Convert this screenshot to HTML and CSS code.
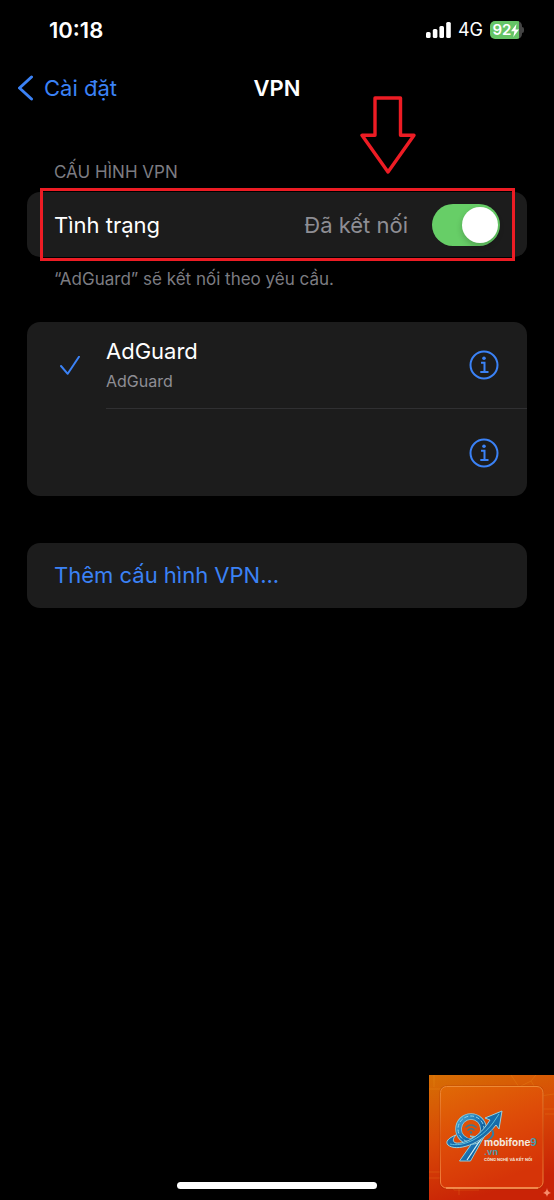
FILE: index.html
```html
<!DOCTYPE html>
<html lang="vi">
<head>
<meta charset="utf-8">
<meta name="viewport" content="width=device-width, initial-scale=1">
<title>VPN</title>
<link rel="stylesheet" href="styles.css">
</head>
<body>
<div class="screen">
  <header class="status-bar">
    <time class="clock">10:18</time>
    <div class="indicators">
      <svg class="signal" width="25" height="16" viewBox="0 0 25 16" fill="#fff" aria-hidden="true">
        <rect x="0" y="10" width="4.600" height="6" rx="1.500"/>
        <rect x="6.800" y="7" width="4.600" height="9" rx="1.500"/>
        <rect x="13.400" y="4" width="4.600" height="12" rx="1.500"/>
        <rect x="20.200" y="0" width="4.600" height="16" rx="1.500"/>
      </svg>
      <span class="network">4G</span>
      <span class="battery">
        <span class="level">92</span>
        <svg width="8" height="13" viewBox="0 0 8 13" fill="#fff" aria-hidden="true"><path d="M5.500 0 0 7.300h3.400L2.300 13 8 5.400H4.500z"/></svg>
      </span>
    </div>
  </header>

  <nav class="nav-bar">
    <a class="back" href="#">
      <svg width="16" height="26" viewBox="0 0 16 26" fill="none" stroke="currentColor" stroke-width="3" stroke-linecap="round" stroke-linejoin="round" aria-hidden="true"><path d="M13.500 2 1.500 13l12 11"/></svg>
      <span>Cài đặt</span>
    </a>
    <h1 class="title">VPN</h1>
  </nav>

  <main class="content">
    <section class="group">
      <h2 class="caption">CẤU HÌNH VPN</h2>
      <div class="card status-card">
        <label class="row" for="vpn-status">
          <span class="label">Tình trạng</span>
          <span class="value">Đã kết nối</span>
          <input class="switch" id="vpn-status" type="checkbox" role="switch" checked>
        </label>
        <div class="highlight"></div>
        <svg class="arrow" width="56" height="80" viewBox="0 0 56 80" fill="none" stroke="#ed1c24" stroke-width="3.400" stroke-linejoin="round" aria-hidden="true"><path d="M15 2h25.500v37.300H54L28 76 2 39.300h13z"/></svg>
      </div>
      <p class="footnote">“AdGuard” sẽ kết nối theo yêu cầu.</p>
    </section>

    <ul class="card profiles">
      <li class="profile">
        <svg class="check" width="20" height="20" viewBox="0 0 20 20" fill="none" stroke="currentColor" stroke-width="2" stroke-linecap="round" stroke-linejoin="round" aria-hidden="true"><path d="M1 10l6.700 7.800L19 0.800"/></svg>
        <div class="profile-body">
          <div class="names">
            <span class="label">AdGuard</span>
            <span class="detail">AdGuard</span>
          </div>
          <button class="info" type="button" aria-label="Chi tiết AdGuard">
            <svg width="30" height="30" viewBox="0 0 30 30" fill="none" stroke="currentColor" stroke-width="2" aria-hidden="true"><circle cx="15" cy="15" r="13.500"/><path d="M12 12.700h3.500v9M11.300 22h8.200"/><circle cx="15" cy="8.200" r="1.800" fill="currentColor" stroke="none"/></svg>
          </button>
        </div>
      </li>
      <li class="profile">
        <span class="check"></span>
        <div class="profile-body">
          <div class="names"></div>
          <button class="info" type="button" aria-label="Chi tiết">
            <svg width="30" height="30" viewBox="0 0 30 30" fill="none" stroke="currentColor" stroke-width="2" aria-hidden="true"><circle cx="15" cy="15" r="13.500"/><path d="M12 12.700h3.500v9M11.300 22h8.200"/><circle cx="15" cy="8.200" r="1.800" fill="currentColor" stroke="none"/></svg>
          </button>
        </div>
      </li>
    </ul>

    <button class="card add" type="button">Thêm cấu hình VPN...</button>
  </main>

  <div class="home-indicator"></div>

  <aside class="brand">
    <svg class="brand-art" viewBox="0 0 125 125" aria-hidden="true">
      <defs>
        <linearGradient id="back" x1="0" y1="0" x2="0.300" y2="1"><stop offset="0" stop-color="#d66f04"/><stop offset="0.500" stop-color="#d84906"/><stop offset="1" stop-color="#c92306"/></linearGradient>
        <linearGradient id="panel" x1="0" y1="0" x2="0.400" y2="1"><stop offset="0" stop-color="#e06a06"/><stop offset="0.500" stop-color="#de4c08"/><stop offset="1" stop-color="#d63408"/></linearGradient>
        <linearGradient id="edge" x1="0" y1="0" x2="0" y2="1"><stop offset="0" stop-color="#ee8a35"/><stop offset="0.500" stop-color="#dc5a18"/><stop offset="1" stop-color="#f58340"/></linearGradient>
        <linearGradient id="blue" x1="0" y1="0" x2="1" y2="1"><stop offset="0" stop-color="#4aa6d0"/><stop offset="0.500" stop-color="#1871b2"/><stop offset="1" stop-color="#0c477f"/></linearGradient>
      </defs>
      <rect width="125" height="125" fill="url(#back)"/>
      <g fill="none" stroke="#f2a526" stroke-width="0.700" opacity="0.300"><path d="M82 0l8 12 12-6 5-6M102 6l9 15 14-2M111 21l-5 12M0 97h24l8 8h18M0 103h18l7 12h25M30 90v30M113 34h12M116 39h9M5 0v12M0 14h12"/></g>
      <rect x="10.500" y="10.500" width="104.500" height="104" rx="7" fill="#a32c04" opacity="0.400"/>
      <rect x="11.500" y="11.500" width="102.500" height="101.500" rx="6" fill="url(#panel)" stroke="url(#edge)" stroke-width="1"/>
      <path d="M17 113h92" stroke="#ffb873" stroke-width="1"/>
      <path d="M41 61 51 62 56 60 41.500 86H30.500L46 64z" fill="url(#blue)" stroke="#8fcbd9" stroke-width="1"/>
      <circle cx="42" cy="54" r="12.500" fill="none" stroke="#8fcbd9" stroke-width="6.500"/>
      <circle cx="42" cy="54" r="12.500" fill="none" stroke="url(#blue)" stroke-width="5"/>
      <circle cx="42" cy="54" r="13" fill="none" stroke="#8fd3e8" stroke-width="1" stroke-dasharray="4 2"/>
      <path d="M52 64 38 85" stroke="#d9f5f5" stroke-width="1.200"/>
      <g stroke-linejoin="round">
        <path d="M27 60c-8 3-11 7-8 10 8 7 33 0 48-20l3 4 3-18-17 7 5 2C51 62 36 69 27 68c-4-1-3-5 0-8z" fill="#176caa" stroke="#9bd1dc" stroke-width="1"/>
        <path d="M21 69c12 3 30-4 43-21l6-9" fill="none" stroke="#5bc0df" stroke-width="1"/>
        <path d="M63 55c3 4 0 8-5 11" fill="none" stroke="#327fa4" stroke-width="2"/>
      </g>
      <g fill="none" stroke="#397a91" stroke-width="1.600" stroke-linecap="round"><path d="M37 52q5-4 10 0M39 55q3-2.500 6 0"/><circle cx="42" cy="57.500" r="0.500"/></g>
      <path d="M118 113q.5 4 4 5-3.500.5-4 4-.5-3.500-4-4 3.500-1 4-5" fill="#f78d6c"/>
    </svg>
    <div class="brand-text">
      <strong class="brand-name">mobifone<span>9</span></strong>
      <strong class="brand-domain">.vn</strong>
      <small class="brand-tag">CÔNG NGHỆ VÀ KẾT NỐI</small>
    </div>
  </aside>
</div>
</body>
</html>
```
FILE: styles.css
```css
* { box-sizing: border-box; }

body {
  margin: 0;
  background: #000;
  color: #fff;
  font-family: Inter, "Noto Sans", sans-serif;
  font-size: 22px;
  line-height: 28px;
}

.screen {
  position: relative;
  display: flex;
  flex-direction: column;
  min-height: 100vh;
}

.status-bar {
  display: flex;
  align-items: center;
  justify-content: space-between;
  height: 60px;
  padding: 0 30px 0 49px;
}

.clock { font-size: 22px; font-weight: 600; }

.indicators { display: flex; align-items: center; gap: 7px; }

.network { font-size: 18px; line-height: 20px; }

.battery {
  position: relative;
  display: flex;
  align-items: center;
  justify-content: center;
  width: 32px;
  height: 18px;
  margin-right: 2px;
  border-radius: 5px;
  background: linear-gradient(90deg, #65c466 92%, #444 92%);
}

.battery::after {
  content: "";
  position: absolute;
  left: 100%;
  top: 6px;
  width: 2px;
  height: 6px;
  border-radius: 0 2px 2px 0;
  background: #444;
}

.level { font-size: 15px; line-height: 18px; font-weight: 600; }

.nav-bar {
  display: grid;
  grid-template-columns: 1fr auto 1fr;
  align-items: center;
  height: 56px;
  padding: 0 18px;
}

.back {
  display: flex;
  align-items: center;
  gap: 10px;
  color: #3b82f6;
  text-decoration: none;
}

.title { margin: 0; font-size: 22px; font-weight: 600; }

.content { flex: 1; padding: 44px 27px 0; }

.caption, .footnote {
  margin: 0;
  padding: 0 27px;
  color: #7c7c82;
  font-size: 17px;
  font-weight: 400;
  line-height: 24px;
}

.caption { padding-bottom: 8px; }
.footnote { padding-top: 10px; }

.card {
  border-radius: 13px;
  background: #1c1c1c;
}

.status-card { position: relative; }

.row {
  display: flex;
  align-items: center;
  height: 65px;
  padding: 0 27px;
}

.row .label { flex: 1; }

.value { margin-right: 24px; color: #8e8e94; }

.switch {
  appearance: none;
  display: flex;
  justify-content: flex-end;
  width: 68px;
  height: 42px;
  margin: 0;
  padding: 3px 2px;
  border-radius: 21px;
  background: #67ce67;
}

.switch:not(:checked) { justify-content: flex-start; background: #39393d; }

.switch::before {
  content: "";
  width: 36px;
  height: 36px;
  border-radius: 50%;
  background: #fff;
  box-shadow: 0 3px 6px rgba(0, 0, 0, 0.2);
}

.highlight {
  position: absolute;
  inset: -4px 12px -4px 13px;
  border: 3px solid #ed1c24;
  pointer-events: none;
}

.arrow {
  position: absolute;
  right: 111px;
  bottom: 100%;
  margin-bottom: 16px;
}

.profiles {
  margin: 31px 0 0;
  padding: 0;
  list-style: none;
}

.profile {
  display: flex;
  align-items: center;
  height: 87px;
  padding-left: 33px;
}

.check { width: 20px; margin-right: 26px; color: #3b82f6; }

.profile-body {
  display: flex;
  flex: 1;
  align-items: center;
  align-self: stretch;
  padding-right: 28px;
}

.profile:first-child .profile-body { border-bottom: 1px solid #303032; }

.names { display: flex; flex: 1; flex-direction: column; gap: 4px; }

.detail { color: #8e8e94; font-size: 16px; line-height: 24px; }

.info {
  display: flex;
  padding: 0;
  border: 0;
  background: none;
  color: #3b82f6;
}

.add {
  display: block;
  width: 100%;
  margin-top: 47px;
  padding: 18px 27px 19px;
  border: 0;
  color: #3b82f6;
  font: inherit;
  text-align: left;
}

.home-indicator {
  width: 36%;
  height: 7px;
  margin: 0 auto 11px;
  border-radius: 4px;
  background: #fff;
}

.brand {
  position: absolute;
  right: 0;
  bottom: 0;
  width: 125px;
  height: 125px;
}

.brand-art { display: block; width: 100%; }

.brand-text {
  position: absolute;
  left: 55px;
  top: 62px;
  display: flex;
  flex-direction: column;
  color: #f4e7dc;
}

.brand-name { font-size: 10px; line-height: 11px; }
.brand-name span, .brand-domain { color: #4a9cad; }
.brand-domain { font-size: 9px; line-height: 8px; }
.brand-tag { font-size: 4px; line-height: 8px; font-weight: 700; white-space: nowrap; }
```
